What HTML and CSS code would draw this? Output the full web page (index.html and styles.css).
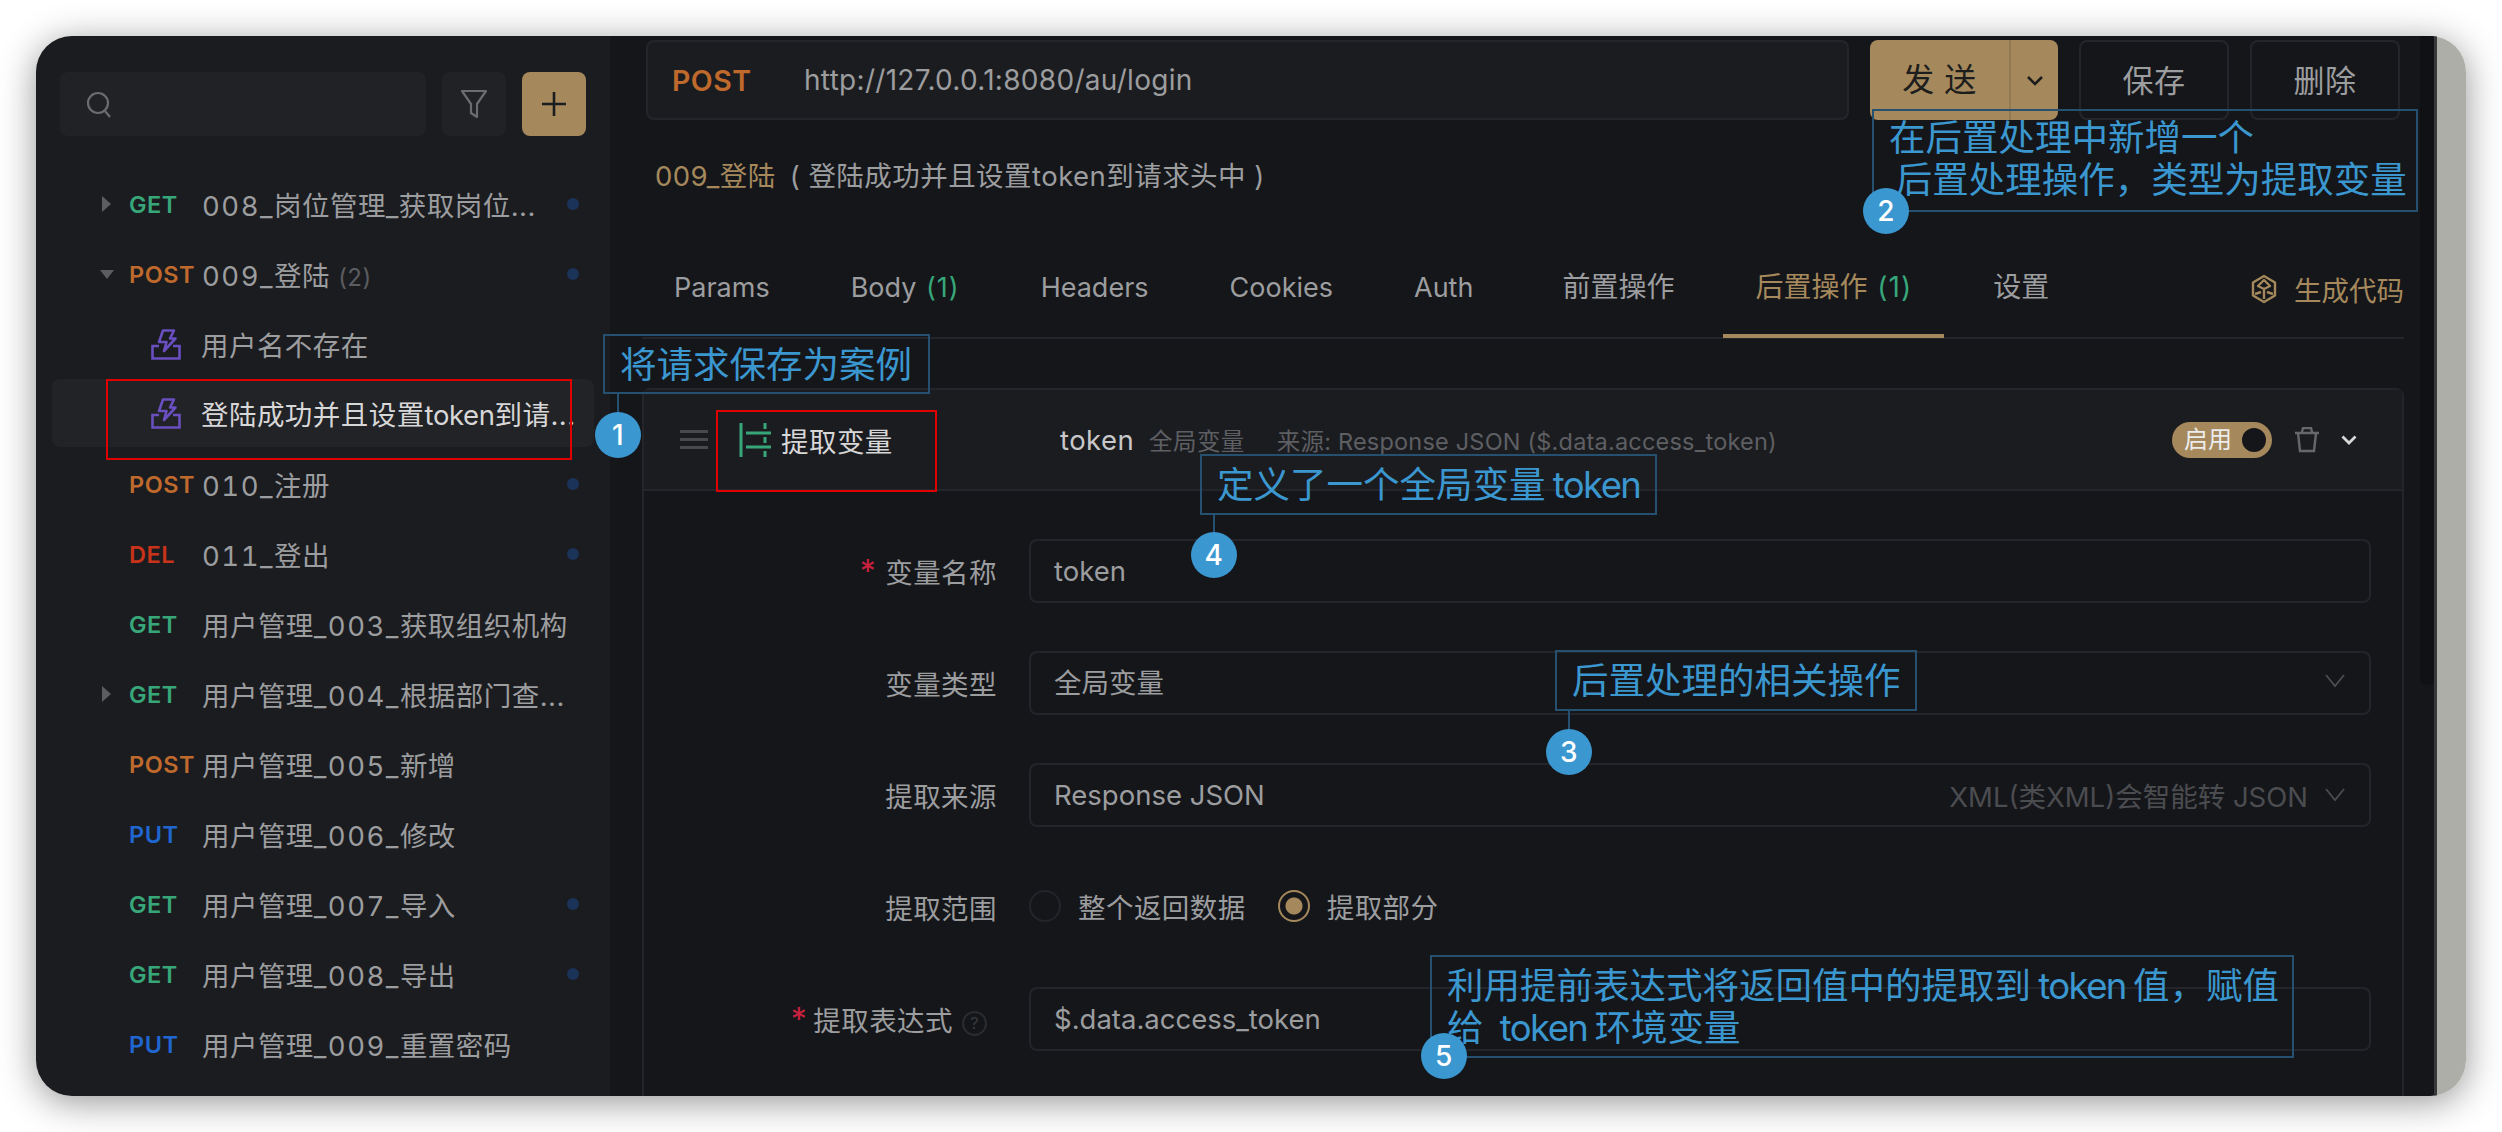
FILE: index.html
```html
<!DOCTYPE html>
<html lang="zh-CN">
<head>
    <meta charset="UTF-8">
    <title>后置操作 - 提取变量</title>
    <link rel="stylesheet" href="styles.css">
</head>
<body>
<div class="window">
    <aside class="sidebar">
        <div class="toolbar">
            <div class="search">
                <svg width="26" height="28" viewBox="0 0 26 28" fill="none" stroke="#6b6c70" stroke-width="2.2"><circle cx="12" cy="13" r="10"/><path d="M19 21l5 6"/></svg>
            </div>
            <div class="tool-btn">
                <svg width="28" height="30" viewBox="0 0 28 30" fill="none" stroke="#6b6c70" stroke-width="2.2" stroke-linejoin="round"><path d="M2 2h24l-9 13v13l-6-4v-9z"/></svg>
            </div>
            <div class="tool-btn add-btn">
                <svg width="26" height="26" viewBox="0 0 26 26" stroke="#1b1c20" stroke-width="2.6"><path d="M13 1v24M1 13h24"/></svg>
            </div>
        </div>
        <ul class="tree">
            <li class="row"><span class="caret right"></span><span class="method get">GET</span><span class="name"><i>008_</i>岗位管理_获取岗位...</span><span class="dot"></span></li>
            <li class="row"><span class="caret down"></span><span class="method post">POST</span><span class="name"><i>009_</i>登陆 <em>(2)</em></span><span class="dot"></span></li>
            <li class="row case">
                <svg class="case-icon" width="30" height="31" viewBox="0 0 30 31" fill="none" stroke="#6a4fc0" stroke-width="2.6"><path d="M12 1.500h11l-4 8h5.500L13 22l2.500-9H8z" stroke-linejoin="round"/><path d="M8 17H1.500v12.500h27V17H22"/></svg>
                <span class="name">用户名不存在</span>
            </li>
            <li class="row case selected">
                <svg class="case-icon" width="30" height="31" viewBox="0 0 30 31" fill="none" stroke="#6a4fc0" stroke-width="2.6"><path d="M12 1.500h11l-4 8h5.500L13 22l2.500-9H8z" stroke-linejoin="round"/><path d="M8 17H1.500v12.500h27V17H22"/></svg>
                <span class="name">登陆成功并且设置<u>token</u>到请...</span>
            </li>
            <li class="row"><span class="caret"></span><span class="method post">POST</span><span class="name"><i>010_</i>注册</span><span class="dot"></span></li>
            <li class="row"><span class="caret"></span><span class="method del">DEL</span><span class="name"><i>011_</i>登出</span><span class="dot"></span></li>
            <li class="row"><span class="caret"></span><span class="method get">GET</span><span class="name">用户管理<i>_003_</i>获取组织机构</span></li>
            <li class="row"><span class="caret right"></span><span class="method get">GET</span><span class="name">用户管理<i>_004_</i>根据部门查...</span></li>
            <li class="row"><span class="caret"></span><span class="method post">POST</span><span class="name">用户管理<i>_005_</i>新增</span></li>
            <li class="row"><span class="caret"></span><span class="method put">PUT</span><span class="name">用户管理<i>_006_</i>修改</span></li>
            <li class="row"><span class="caret"></span><span class="method get">GET</span><span class="name">用户管理<i>_007_</i>导入</span><span class="dot"></span></li>
            <li class="row"><span class="caret"></span><span class="method get">GET</span><span class="name">用户管理<i>_008_</i>导出</span><span class="dot"></span></li>
            <li class="row"><span class="caret"></span><span class="method put">PUT</span><span class="name">用户管理<i>_009_</i>重置密码</span></li>
        </ul>
    </aside>

    <main class="main">
        <div class="content">
            <div class="topbar">
                <div class="url-bar">
                    <span class="url-method">POST</span>
                    <span class="url">http://127.0.0.1:8080/au/login</span>
                </div>
                <div class="send-btn"><span class="send-label">发 送</span><span class="send-more"><svg width="18" height="11" viewBox="0 0 18 11" fill="none" stroke="#1d1d1d" stroke-width="2.600"><path d="M2 2l7 7 7-7"/></svg></span></div>
                <div class="plain-btn">保存</div>
                <div class="plain-btn">删除</div>
            </div>

            <div class="title"><span class="title-api">009_登陆</span><span class="title-case">( 登陆成功并且设置token到请求头中 )</span></div>

            <div class="tabs">
                <span class="tab">Params</span>
                <span class="tab">Body <b>(1)</b></span>
                <span class="tab">Headers</span>
                <span class="tab">Cookies</span>
                <span class="tab tab-auth">Auth</span>
                <span class="tab tab-cn">前置操作</span>
                <span class="tab tab-cn active">后置操作 <b>(1)</b></span>
                <span class="tab tab-cn">设置</span>
                <span class="gen-code">
                    <svg width="26" height="30" viewBox="0 0 26 30" fill="none" stroke="#a5895c" stroke-width="2.400" stroke-linejoin="round"><path d="M13 2l11 6.500v13L13 28 2 21.500v-13z"/><path d="M13 6l-6 6 6 3 6-3zM13 15v10M4 20l6-2M22 20l-6-2"/></svg>
                    生成代码
                </span>
            </div>

            <section class="card">
                <header class="card-head">
                    <span class="drag"><i></i><i></i><i></i></span>
                    <span class="rule-title">
                        <svg width="32" height="34" viewBox="0 0 32 34" fill="none" stroke="#37a77a" stroke-width="3"><path d="M2 0v34M7 10h25M7 24h25"/><path d="M26 0v6M26 14v6M26 28v6"/></svg>
                        提取变量
                    </span>
                    <span class="rule-var">token</span>
                    <span class="rule-meta">全局变量</span>
                    <span class="rule-meta rule-source">来源: Response JSON ($.data.access_token)</span>
                    <span class="toggle">启用<i></i></span>
                    <svg class="trash" width="24" height="26" viewBox="0 0 24 26" fill="none" stroke="#66676b" stroke-width="2.400"><path d="M0 6h24M7 5l1-4h8l1 4M3 6l2 18h14l2-18"/></svg>
                    <svg width="16" height="10" viewBox="0 0 16 10" fill="none" stroke="#d8d8d8" stroke-width="2.800"><path d="M1.500 1.500L8 8l6.500-6.500"/></svg>
                </header>
                <div class="form">
                    <div class="form-row">
                        <label class="form-label"><s>*</s>变量名称</label>
                        <div class="field">token</div>
                    </div>
                    <div class="form-row">
                        <label class="form-label">变量类型</label>
                        <div class="field field-cn">全局变量<svg class="field-arrow" width="20" height="14" viewBox="0 0 20 14" fill="none" stroke="#4b4c50" stroke-width="1.800"><path d="M1 1l9 11 9-11"/></svg></div>
                    </div>
                    <div class="form-row">
                        <label class="form-label">提取来源</label>
                        <div class="field">Response JSON<span class="field-hint">XML(类XML)会智能转 JSON</span><svg class="hint-arrow" width="20" height="14" viewBox="0 0 20 14" fill="none" stroke="#4b4c50" stroke-width="1.800"><path d="M1 1l9 11 9-11"/></svg></div>
                    </div>
                    <div class="form-row">
                        <label class="form-label">提取范围</label>
                        <div class="radios">
                            <span class="radio"></span><span class="radio-text">整个返回数据</span>
                            <span class="radio checked"></span><span class="radio-text">提取部分</span>
                        </div>
                    </div>
                    <div class="form-row">
                        <label class="form-label"><s class="star-near">*</s>提取表达式<span class="help">?</span></label>
                        <div class="field">$.data.access_token</div>
                    </div>
                </div>
            </section>
        </div>
        <div class="rail"><div class="rail-thumb"></div></div>
    </main>

    <!-- 标注 -->
    <div class="mark mark-1"></div>
    <div class="mark mark-2"></div>

    <div class="note note-1">将请求保存为案例</div>
    <div class="stem stem-1"></div>
    <div class="pin pin-1">1</div>

    <div class="note note-2">在后置处理中新增一个
&#8201;后置处理操作，类型为提取变量</div>
    <div class="pin pin-2">2</div>

    <div class="note note-3">后置处理的相关操作</div>
    <div class="stem stem-3"></div>
    <div class="pin pin-3">3</div>

    <div class="note note-4">定义了一个全局变量 <b>token</b></div>
    <div class="stem stem-4"></div>
    <div class="pin pin-4">4</div>

    <div class="note note-5">利用提前表达式将返回值中的提取到 <b>token</b> 值，赋值
给 <b class="tk-gap">token</b> 环境变量</div>
    <div class="pin pin-5">5</div>
</div>
</body>
</html>
```

FILE: styles.css
```css
* {
    box-sizing: border-box;
}
body {
    margin: 0;
    height: 1132px;
    overflow: hidden;
    background-color: #fff;
    font-family: Inter, "Noto Sans CJK SC", sans-serif;
    font-size: 27.5px;
    letter-spacing: 0.45px;
    color: #9c9d9f;
}
.window {
    position: relative;
    display: flex;
    width: 2430px;
    height: 1060px;
    margin: 36px;
    border-radius: 36px;
    overflow: hidden;
    background-color: #aeaea8;
}
body::before {
    content: "";
    position: absolute;
    left: 36px;
    top: 36px;
    width: 2430px;
    height: 1060px;
    border-radius: 36px;
    box-shadow: 0 6px 36px rgba(0, 0, 0, 0.42);
}

/* sidebar */
.sidebar {
    width: 574px;
    flex-shrink: 0;
    background-color: #1b1c20;
    padding: 36px 16px 0;
}
.toolbar {
    display: flex;
    gap: 16px;
    padding: 0 8px;
}
.search {
    width: 366px;
    height: 64px;
    background-color: #212226;
    border-radius: 8px;
    display: flex;
    align-items: center;
    padding-left: 26px;
}
.tool-btn {
    width: 64px;
    height: 64px;
    background-color: #212226;
    border-radius: 8px;
    display: flex;
    align-items: center;
    justify-content: center;
}
.add-btn {
    background-color: #a5895c;
}
.tree {
    list-style: none;
    margin: 33px 0 0;
    padding: 0;
}
.row {
    display: flex;
    align-items: center;
    height: 70px;
    padding-left: 48px;
    white-space: nowrap;
}
.row.selected {
    background-color: #222326;
    border-radius: 8px;
    height: 68px;
    margin-bottom: 2px;
    color: #d7d7d8;
}
.caret {
    width: 29px;
    height: 0;
    flex-shrink: 0;
}
.caret.right {
    border-left: 9px solid #5c5d60;
    border-top: 8px solid transparent;
    border-bottom: 8px solid transparent;
    width: 0;
    margin-left: 2px;
    margin-right: 18px;
}
.caret.down {
    border-top: 9px solid #5c5d60;
    border-left: 7px solid transparent;
    border-right: 7px solid transparent;
    width: 0;
    margin-right: 15px;
}
.method {
    width: 73px;
    flex-shrink: 0;
    font-size: 23.5px;
    font-weight: 600;
    letter-spacing: 0.5px;
}
.get { color: #37a77a; }
.post { color: #bf6a2c; }
.del { color: #c8331a; }
.put { color: #1f66d0; }
.name i {
    font-style: normal;
    font-variant-numeric: tabular-nums;
    letter-spacing: 1.5px;
}
.name u {
    text-decoration: none;
    letter-spacing: -0.4px;
}
.name em {
    font-style: normal;
    font-size: 24px;
    color: #5c5d60;
}
.dot {
    width: 12px;
    height: 12px;
    border-radius: 50%;
    background-color: #1b3358;
    margin-left: auto;
    margin-right: 15px;
}
.case {
    padding-left: 99px;
}
.case-icon {
    margin-right: 20px;
    flex-shrink: 0;
}

/* main */
.main {
    width: 1827px;
    flex-shrink: 0;
    display: flex;
    background-color: #15161a;
    border-right: 3px solid #38393b;
}
.content {
    width: 1794px;
    flex-shrink: 0;
    padding: 4px 0 0 32px;
}
.rail {
    flex: 1;
    padding-left: 16px;
}
.rail-thumb {
    height: 649px;
    background-color: #101114;
    border-radius: 0 0 6px 6px;
}
.topbar {
    display: flex;
    padding-left: 4px;
}
.url-bar {
    width: 1203px;
    height: 80px;
    border: 2px solid #24252a;
    border-radius: 8px;
    display: flex;
    align-items: center;
    padding-left: 24px;
    background-color: #1b1c20;
}
.url-method {
    width: 132px;
    font-size: 28.5px;
    font-weight: 600;
    color: #bf6a2c;
}
.url {
    font-size: 28px;
    letter-spacing: 0.3px;
}
.send-btn {
    width: 188px;
    height: 80px;
    margin-left: 21px;
    display: flex;
    align-items: center;
    background-color: #a5895c;
    border-radius: 8px;
    color: #1d1d1d;
}
.send-label {
    width: 139px;
    text-align: center;
    font-size: 32px;
    line-height: 76px;
}
.send-more {
    flex: 1;
    height: 100%;
    border-left: 2px solid #947a50;
    display: flex;
    align-items: center;
    justify-content: center;
}
.plain-btn {
    width: 150px;
    height: 80px;
    margin-left: 21px;
    border: 2px solid #24252a;
    border-radius: 8px;
    display: flex;
    align-items: center;
    justify-content: center;
    font-size: 31px;
    padding-bottom: 4px;
}
.title {
    margin-top: 36px;
    height: 40px;
    line-height: 40px;
    padding-left: 13px;
}
.title-api {
    color: #a5895c;
}
.title-case {
    margin-left: 14px;
}
.tabs {
    display: flex;
    align-items: center;
    height: 99px;
    margin-top: 44px;
    border-bottom: 2px solid #24252a;
    font-size: 27px;
    letter-spacing: 0;
}
.tab {
    height: 99px;
    line-height: 97px;
    padding: 0 32px;
    margin-right: 17px;
    white-space: nowrap;
}
.tab-auth {
    margin-right: 25px;
}
.tab-cn {
    font-size: 28px;
}
.tab b {
    font-weight: 400;
    color: #37a77a;
    margin-left: 2px;
    letter-spacing: 1px;
}
.tab.active {
    color: #a5895c;
    border-bottom: 4px solid #a5895c;
}
.gen-code {
    margin-left: auto;
    display: flex;
    align-items: center;
    gap: 17px;
    color: #a5895c;
    font-size: 27.5px;
}
.card {
    height: 800px;
    margin-top: 49px;
    border: 2px solid #24252a;
    border-radius: 8px 8px 0 0;
}
.card-head {
    display: flex;
    align-items: center;
    height: 101px;
    padding: 0 45px 0 36px;
    background-color: #1b1c20;
    border-bottom: 2px solid #24252a;
}
.drag {
    width: 28px;
    display: flex;
    flex-direction: column;
    gap: 5px;
}
.drag i {
    height: 3px;
    background-color: #48494d;
}
.rule-title {
    display: flex;
    align-items: center;
    width: 321px;
    margin-left: 31px;
    gap: 10px;
    color: #d7d7d8;
    font-size: 27.5px;
}
.rule-var {
    width: 89px;
    font-size: 27.5px;
    color: #c8c8c9;
}
.rule-meta {
    font-size: 23.5px;
    color: #5e5f63;
}
.rule-source {
    margin-left: 32px;
    letter-spacing: 0.2px;
}
.toggle {
    position: relative;
    width: 100px;
    height: 36px;
    margin-left: auto;
    padding-left: 12px;
    border-radius: 18px;
    background-color: #a5895c;
    color: #ececec;
    font-size: 24px;
    line-height: 36px;
    letter-spacing: 0;
}
.toggle i {
    position: absolute;
    right: 6px;
    top: 6px;
    width: 24px;
    height: 24px;
    border-radius: 50%;
    background-color: #15161a;
}
.trash {
    margin: 0 22px 0 23px;
}
.form {
    padding: 48px 31px 0 0;
    display: flex;
    flex-direction: column;
    gap: 48px;
}
.form-row {
    display: flex;
    align-items: center;
    height: 64px;
}
.form-label {
    width: 353px;
    flex-shrink: 0;
    margin-right: 32px;
    text-align: right;
    white-space: nowrap;
}
.form-label s {
    text-decoration: none;
    color: #c8213f;
    font-size: 32px;
    line-height: 0;
    margin-right: 9px;
}
.form-label .star-near {
    margin-right: 6px;
}
.help {
    display: inline-block;
    width: 25px;
    height: 25px;
    margin-left: 9px;
    margin-right: 10px;
    border: 2px solid #2b2c30;
    border-radius: 50%;
    font-size: 16px;
    line-height: 21px;
    text-align: center;
    color: #3a3b3f;
    vertical-align: 2px;
}
.field {
    flex: 1;
    height: 64px;
    display: flex;
    align-items: center;
    padding: 0 24px 0 23px;
    border: 2px solid #24252a;
    border-radius: 8px;
    font-size: 27.5px;
    letter-spacing: 0;
}
.field-cn {
    padding-bottom: 4px;
}
.field-arrow {
    margin-left: auto;
}
.field-hint {
    margin-left: auto;
    color: #4b4c50;
}
.hint-arrow {
    margin-left: 17px;
}
.radios {
    display: flex;
    align-items: center;
    padding-bottom: 2px;
}
.radio {
    width: 32px;
    height: 32px;
    border: 2px solid #24252a;
    border-radius: 50%;
}
.radio.checked {
    margin-left: 32px;
    border-color: #a5895c;
    background: radial-gradient(circle, #a5895c 0 8px, transparent 9px);
}
.radio-text {
    margin-left: 17px;
    font-size: 27.5px;
}

/* 标注 */
.mark {
    position: absolute;
    border: 2px solid #e00000;
}
.mark-1 {
    left: 70px;
    top: 343px;
    width: 466px;
    height: 81px;
}
.mark-2 {
    left: 680px;
    top: 374px;
    width: 221px;
    height: 82px;
}
.note {
    position: absolute;
    border: 2px solid #25506f;
    color: #3b97cf;
    font-size: 36.5px;
    line-height: 42px;
    letter-spacing: 0;
    word-spacing: -3px;
    white-space: pre;
    padding: 8px 0 0 15px;
}
.note b {
    font-weight: 400;
    letter-spacing: -1.6px;
}
.note .tk-gap {
    margin-left: 9px;
}
.note-1 {
    left: 567px;
    top: 298px;
    width: 327px;
    height: 60px;
}
.note-2 {
    left: 1836px;
    top: 73px;
    width: 546px;
    height: 103px;
    padding-top: 6px;
}
.note-3 {
    left: 1519px;
    top: 614px;
    width: 362px;
    height: 61px;
}
.note-4 {
    left: 1164px;
    top: 418px;
    width: 457px;
    height: 61px;
}
.note-5 {
    left: 1394px;
    top: 919px;
    width: 864px;
    height: 103px;
    padding-top: 8px;
}
.stem {
    position: absolute;
    width: 2px;
    background-color: #25506f;
}
.stem-1 {
    left: 581px;
    top: 358px;
    height: 20px;
}
.stem-3 {
    left: 1532px;
    top: 675px;
    height: 20px;
}
.stem-4 {
    left: 1177px;
    top: 479px;
    height: 20px;
}
.pin {
    position: absolute;
    width: 46px;
    height: 46px;
    border-radius: 50%;
    background-color: #3b97cf;
    color: #fff;
    font-size: 28px;
    font-weight: 500;
    line-height: 46px;
    text-align: center;
}
.pin-1 { left: 559px; top: 376px; }
.pin-2 { left: 1827px; top: 152px; }
.pin-3 { left: 1510px; top: 693px; }
.pin-4 { left: 1155px; top: 496px; }
.pin-5 { left: 1385px; top: 997px; }
```
